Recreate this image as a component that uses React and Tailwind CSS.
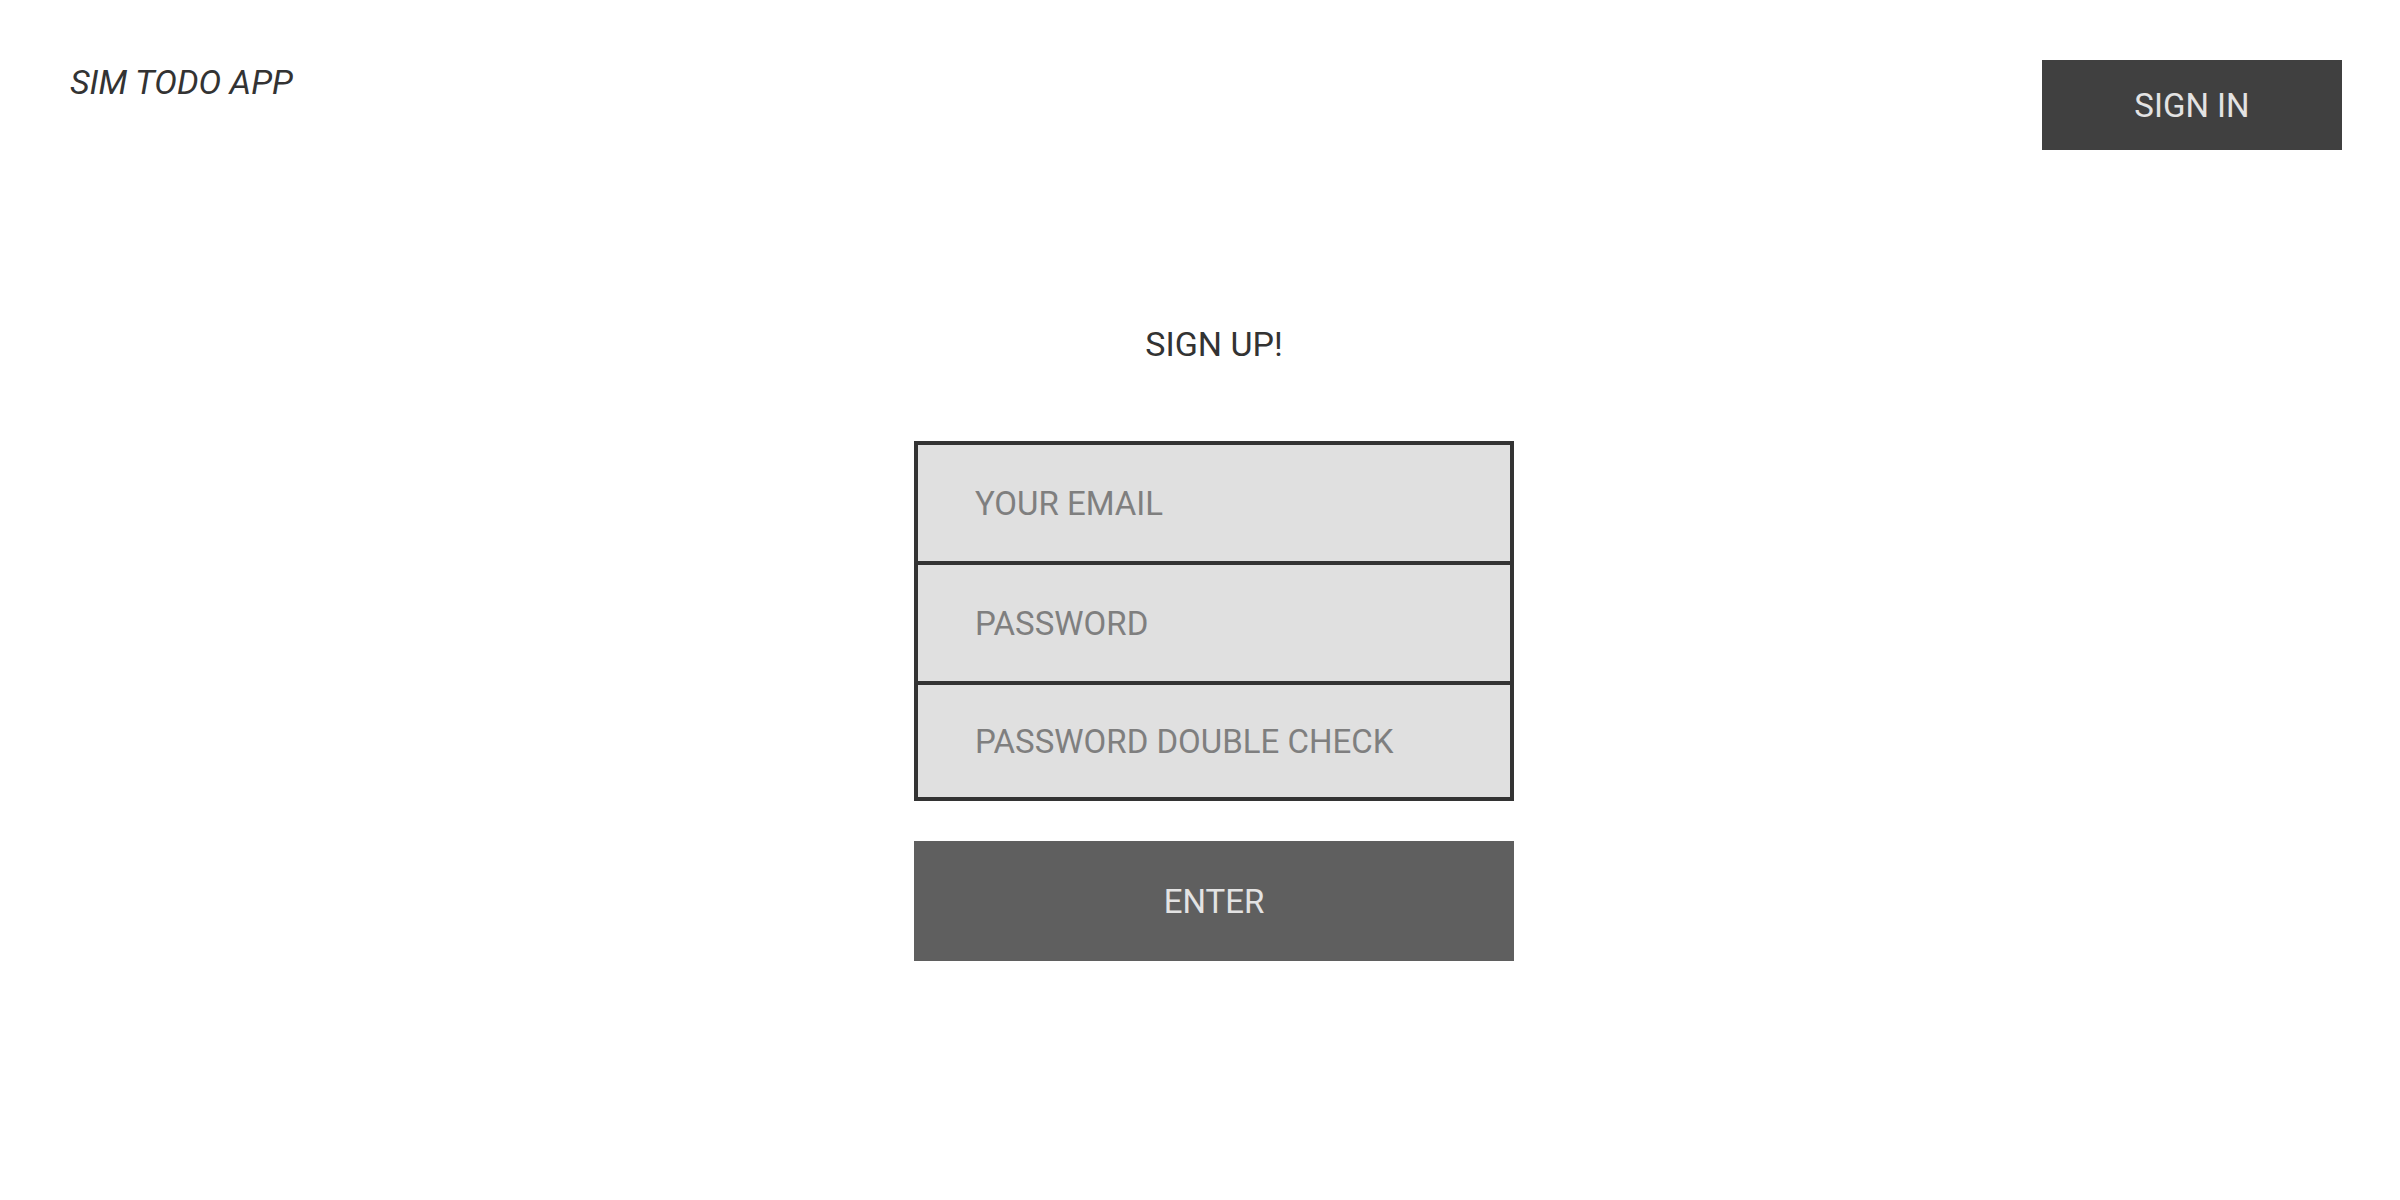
import { useState } from 'react'

export default function App() {
  const [form, setForm] = useState({ email: '', password: '', check: '' })

  const handleChange = (field, value) => {
    setForm({ ...form, [field]: value })
  }

  return (
    <div className="min-h-[1200px] w-full bg-white font-['Roboto','Liberation_Sans',sans-serif]">
      <header className="flex items-start justify-between pl-[70px] pr-[58px] pt-[60px]">
        <div className="mt-[5px] text-[34px] leading-none italic text-[#333333]">SIM TODO APP</div>
        <button className="flex h-[90px] w-[300px] items-center justify-center bg-[#404040] text-[33px] leading-none text-[#e3e3e3]">
          SIGN IN
        </button>
      </header>

      <main className="flex flex-col items-center pl-[28px]">
        <h1 className="mt-[177px] text-[34px] leading-none text-[#333333]">SIGN UP!</h1>

        <div className="mt-[80px] flex w-[600px] flex-col border-4 border-[#333333] bg-[#e0e0e0]">
          <input
            type="email"
            placeholder="YOUR EMAIL"
            value={form.email}
            onChange={(e) => handleChange('email', e.target.value)}
            className="h-[116px] bg-transparent pl-[57px] text-[33px] text-[#555] outline-none placeholder:text-[#7f7f7f]"
          />
          <input
            type="password"
            placeholder="PASSWORD"
            value={form.password}
            onChange={(e) => handleChange('password', e.target.value)}
            className="h-[120px] border-t-4 border-[#333333] bg-transparent pl-[57px] text-[33px] text-[#555] outline-none placeholder:text-[#7f7f7f]"
          />
          <input
            type="password"
            placeholder="PASSWORD DOUBLE CHECK"
            value={form.check}
            onChange={(e) => handleChange('check', e.target.value)}
            className="h-[116px] border-t-4 border-[#333333] bg-transparent pl-[57px] text-[33px] text-[#555] outline-none placeholder:text-[#7f7f7f]"
          />
        </div>

        <button className="mt-[40px] flex h-[120px] w-[600px] items-center justify-center bg-[#5f5f5f] text-[33px] leading-none text-[#e3e3e3]">
          ENTER
        </button>
      </main>
    </div>
  )
}
